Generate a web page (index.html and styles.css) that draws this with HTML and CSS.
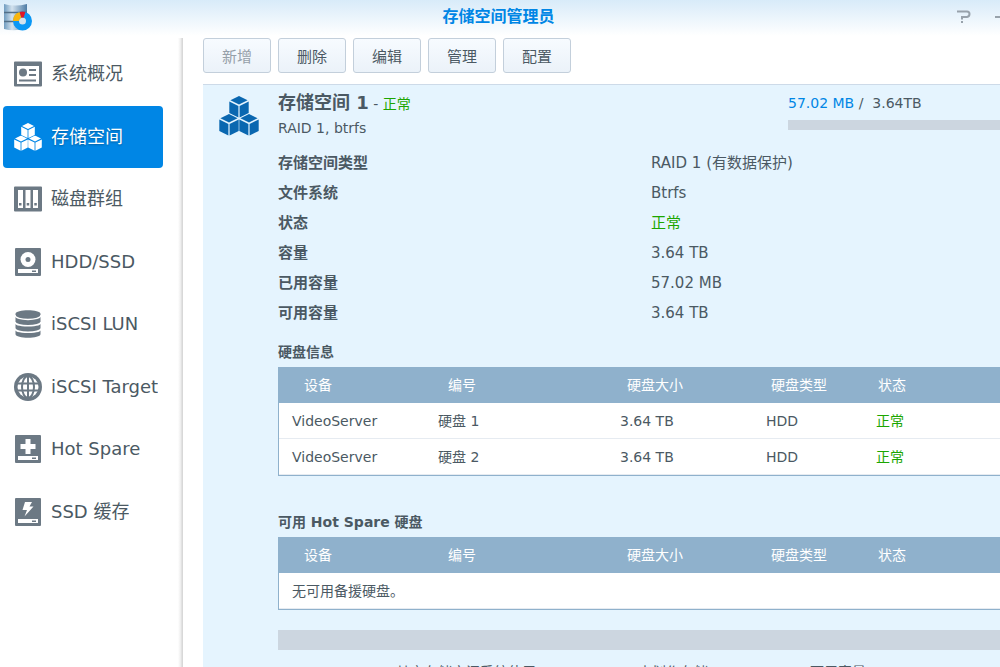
FILE: index.html
```html
<!DOCTYPE html>
<html lang="zh-CN">
<head>
    <meta charset="UTF-8">
    <meta name="viewport" content="width=device-width, initial-scale=1.0">
    <title>存储空间管理员</title>
    <link rel="stylesheet" href="styles.css">
</head>
<body>

<!-- shared icon pieces -->
<svg class="defs" aria-hidden="true">
    <defs>
        <linearGradient id="steel" x1="0" x2="1">
            <stop offset="0" stop-color="#6f9cc0"/>
            <stop offset=".35" stop-color="#d3e2ee"/>
            <stop offset="1" stop-color="#4e7ca5"/>
        </linearGradient>
        <symbol id="cube" viewBox="0 0 20 22">
            <path d="M10 0 L18.600 4.300 L10 8.600 L1.400 4.300 Z"/>
            <path d="M.3 5.500 L9.400 10 V21.500 L.3 17 Z"/>
            <path d="M19.700 5.500 L10.600 10 V21.500 L19.700 17 Z"/>
        </symbol>
        <symbol id="cubes" viewBox="0 0 40 40">
            <use href="#cube" x="10" y="0" width="20" height="22"/>
            <use href="#cube" x="0" y="18" width="20" height="22"/>
            <use href="#cube" x="20" y="18" width="20" height="22"/>
        </symbol>
    </defs>
</svg>

<header class="titlebar">
    <svg class="app-icon" width="30" height="30" viewBox="0 0 30 30" aria-hidden="true">
        <path d="M1 1 Q12 4 24 1 V25 Q12 29 1 26 Z" fill="url(#steel)"/>
        <path d="M1 9.500 H24 M1 18.500 H16" stroke="#526f88" stroke-width="1.500" fill="none"/>
        <circle cx="19.500" cy="18" r="6.500" fill="#d3e2ee" stroke="#0a97f5" stroke-width="6"/>
        <path d="M13 18 A6.500 6.500 0 0 1 17.500 11.800" fill="none" stroke="#f9b50d" stroke-width="6"/>
        <path d="M17.500 11.800 A6.500 6.500 0 0 1 21.500 11.800" fill="none" stroke="#e11628" stroke-width="6"/>
    </svg>
    <h1>存储空间管理员</h1>
    <div class="window-tools">
        <button type="button" aria-label="帮助">
            <svg width="16" height="16" viewBox="0 0 16 16"><path d="M1 2.500 H11 Q13.500 2.500 13.500 5 T11 8 H6 V10.500" fill="none" stroke="#98a2ab" stroke-width="2"/><path d="M5 12 H7 V14 H5 Z" fill="#98a2ab"/></svg>
        </button>
        <button type="button" aria-label="最小化">
            <svg width="16" height="16" viewBox="0 0 16 16"><path d="M1 8 H14" stroke="#98a2ab" stroke-width="2"/></svg>
        </button>
    </div>
</header>

<div class="layout">
    <nav class="sidebar">
        <div class="menu">
            <a href="#overview">
                <svg width="28" height="28" viewBox="0 0 28 28"><path fill-rule="evenodd" d="M1 1.500 H27 Q28 1.500 28 2.500 V25.500 Q28 26.500 27 26.500 H1 Q0 26.500 0 25.500 V2.500 Q0 1.500 1 1.500 Z M3 6 V24 H25 V6 Z"/><circle cx="9" cy="12.500" r="4"/><path d="M15 9 H22 V11 H15 Z M15 14 H22 V16 H15 Z M5 19.500 H22 V21.500 H5 Z"/></svg>
                <span>系统概况</span>
            </a>
            <a href="#volume" class="active">
                <svg width="28" height="28" viewBox="0 0 40 40"><use href="#cubes" width="40" height="40"/></svg>
                <span>存储空间</span>
            </a>
            <a href="#group">
                <svg width="28" height="28" viewBox="0 0 28 28"><path fill-rule="evenodd" d="M1 1.500 H27 Q28 1.500 28 2.500 V25.500 Q28 26.500 27 26.500 H1 Q0 26.500 0 25.500 V2.500 Q0 1.500 1 1.500 Z M4 5 V23 H9 V5 Z M11.500 5 V23 H16.500 V5 Z M19 5 V23 H24 V5 Z"/><path d="M5 18 H7.500 V20.500 H5 Z M12.700 18 H15.200 V20.500 H12.700 Z M20.300 18 H22.800 V20.500 H20.300 Z"/></svg>
                <span>磁盘群组</span>
            </a>
            <a href="#hdd">
                <svg width="28" height="28" viewBox="0 0 28 28"><rect x="1" width="26" height="28" rx="1"/><rect x="4" y="21" width="20" height="4" fill="#fff"/><rect x="18" y="22.500" width="4" height="1.500"/><circle cx="14" cy="11.500" r="7.500" fill="#fff"/><circle cx="14" cy="11.500" r="2.500"/></svg>
                <span>HDD/SSD</span>
            </a>
            <a href="#lun">
                <svg width="28" height="28" viewBox="0 0 28 28"><path d="M1.500 4 V24 C1.500 29 26.500 29 26.500 24 V4 C26.500 -1 1.500 -1 1.500 4 Z"/><path d="M1 5 C1 11 27 11 27 5 M1 12 C1 17 27 17 27 12 M1 18.500 C1 23.500 27 23.500 27 18.500" fill="none" stroke="#fff" stroke-width="1.500"/></svg>
                <span>iSCSI LUN</span>
            </a>
            <a href="#target">
                <svg width="28" height="28" viewBox="0 0 28 28"><circle cx="14" cy="14" r="14"/><circle cx="14" cy="14" r="10.500" fill="#fff"/><path d="M14 2 V26 M3 10.500 H25 M3 17.500 H25" fill="none" stroke="#6c7984" stroke-width="2"/><ellipse cx="14" cy="14" rx="6" ry="11" fill="none" stroke="#6c7984" stroke-width="2"/></svg>
                <span>iSCSI Target</span>
            </a>
            <a href="#spare">
                <svg width="28" height="28" viewBox="0 0 28 28"><rect x="1" width="26" height="28" rx="1"/><rect x="4" y="21" width="20" height="4" fill="#fff"/><rect x="18" y="22.500" width="4" height="1.500"/><path d="M11.500 4 H16.500 V9 H21.500 V14 H16.500 V19 H11.500 V14 H6.500 V9 H11.500 Z" fill="#fff"/></svg>
                <span>Hot Spare</span>
            </a>
            <a href="#cache">
                <svg width="28" height="28" viewBox="0 0 28 28"><rect x="1" width="26" height="28" rx="1"/><rect x="4" y="21" width="20" height="4" fill="#fff"/><rect x="18" y="22.500" width="4" height="1.500"/><path d="M11 4 H18 L15.500 8.500 H19.500 L10.500 18.500 L13 12 H8.500 Z" fill="#fff"/></svg>
                <span>SSD 缓存</span>
            </a>
        </div>
    </nav>

    <main class="content">
        <div class="toolbar">
            <button type="button" disabled>新增</button>
            <button type="button">删除</button>
            <button type="button">编辑</button>
            <button type="button">管理</button>
            <button type="button">配置</button>
        </div>

        <section class="volume">
            <svg class="volume-icon" width="40" height="40" viewBox="0 0 40 40" aria-hidden="true"><use href="#cubes" width="40" height="40"/></svg>

            <div class="volume-body">
                <div class="volume-head">
                    <div>
                        <p class="volume-name"><strong>存储空间 1</strong> - <span class="ok">正常</span></p>
                        <p class="volume-type">RAID 1, btrfs</p>
                    </div>
                    <div class="usage">
                        <p><span class="used">57.02 MB</span> / &nbsp;3.64TB</p>
                        <div class="bar"></div>
                    </div>
                </div>

                <dl class="details">
                    <dt>存储空间类型</dt><dd>RAID 1 (有数据保护)</dd>
                    <dt>文件系统</dt><dd>Btrfs</dd>
                    <dt>状态</dt><dd class="ok">正常</dd>
                    <dt>容量</dt><dd>3.64 TB</dd>
                    <dt>已用容量</dt><dd>57.02 MB</dd>
                    <dt>可用容量</dt><dd>3.64 TB</dd>
                </dl>

                <h2>硬盘信息</h2>
                <table>
                    <thead>
                        <tr><th>设备</th><th>编号</th><th>硬盘大小</th><th>硬盘类型</th><th>状态</th></tr>
                    </thead>
                    <tbody>
                        <tr><td>VideoServer</td><td>硬盘 1</td><td>3.64 TB</td><td>HDD</td><td class="ok">正常</td></tr>
                        <tr><td>VideoServer</td><td>硬盘 2</td><td>3.64 TB</td><td>HDD</td><td class="ok">正常</td></tr>
                    </tbody>
                </table>

                <h2>可用 Hot Spare 硬盘</h2>
                <table>
                    <thead>
                        <tr><th>设备</th><th>编号</th><th>硬盘大小</th><th>硬盘类型</th><th>状态</th></tr>
                    </thead>
                    <tbody>
                        <tr><td colspan="5">无可用备援硬盘。</td></tr>
                    </tbody>
                </table>

                <div class="bar bar-large"></div>
                <div class="legend">
                    <span>其它存储空间系统使用</span>
                    <span>未划作存储</span>
                    <span>可用容量</span>
                </div>
            </div>
        </section>
    </main>
</div>

</body>
</html>
```

FILE: styles.css
```css
* {
    box-sizing: border-box;
}
body {
    margin: 0;
    height: 100vh;
    overflow: hidden;
    display: flex;
    flex-direction: column;
    background: #fff;
    color: #4b5963;
    font-family: "DejaVu Sans", "Noto Sans CJK SC", sans-serif;
    font-size: 14px;
    line-height: 20px;
}
p, h1, h2, dl, dd {
    margin: 0;
}
.defs {
    position: absolute;
    width: 0;
    height: 0;
}
.ok {
    color: #1ca600;
}

/* title bar */
.titlebar {
    flex: none;
    display: grid;
    grid-template-columns: 1fr auto 1fr;
    height: 38px;
    padding: 3px 6px 0 3px;
    background: linear-gradient(#d8ebf9, #fff 36px);
}
.titlebar h1 {
    color: #0086e5;
    font-size: 16px;
    font-weight: bold;
    line-height: 28px;
}
.window-tools {
    display: flex;
    justify-content: flex-end;
    align-items: flex-start;
    gap: 22px;
    margin-right: -16px;
    padding-top: 6px;
}
.window-tools button {
    display: flex;
    padding: 0;
    border: none;
    background: none;
    cursor: pointer;
}

.layout {
    flex: 1;
    display: flex;
    min-height: 0;
}

/* sidebar */
.sidebar {
    flex: none;
    width: 183px;
    padding: 5px 20px 0 3px;
    background: linear-gradient(to left, #d8d8d8 1px, #ececec 2px, #fff 5px);
}
.menu {
    display: grid;
    grid-auto-rows: 1fr;
    height: 500px;
}
.menu a {
    display: flex;
    align-items: center;
    gap: 9px;
    height: 62px;
    padding: 0 2px 0 11px;
    border-radius: 4px;
    color: #4b5963;
    font-size: 18px;
    line-height: 26px;
    text-decoration: none;
    white-space: nowrap;
}
.menu span {
    overflow: hidden;
}
.menu svg {
    flex: none;
    fill: #6c7984;
}
.menu a.active {
    background: #0086e5;
    color: #fff;
    text-shadow: 0 1px 2px rgba(0, 0, 0, 0.3);
}
.menu a.active svg {
    fill: #fff;
}

/* main area */
.content {
    flex: 1;
    min-width: 0;
    padding-left: 20px;
}
.toolbar {
    display: flex;
    gap: 7px;
    margin-bottom: 11px;
}
.toolbar button {
    width: 68px;
    height: 35px;
    padding: 0;
    border: 1px solid #c3cfdb;
    border-radius: 3px;
    background: linear-gradient(#f7fbff, #ebf2f9);
    color: #4b5963;
    font-family: inherit;
    font-size: 15px;
    cursor: pointer;
}
.toolbar button:disabled {
    color: #96a0a9;
    cursor: default;
}
.volume {
    display: flex;
    gap: 19px;
    min-height: 100%;
    padding: 8px 0 0 16px;
    border-top: 1px solid #cddae8;
    background: #e5f4fe;
}
.volume-icon {
    flex: none;
    margin-top: 3px;
    fill: #0a67b0;
}
.volume-body {
    flex: 1;
    min-width: 0;
}
.volume-head {
    display: grid;
    grid-template-columns: 510px 1fr;
}
.volume-name {
    margin-bottom: 4px;
}
.volume-name strong {
    font-size: 18px;
}
.used {
    color: #0086e5;
}
.bar {
    height: 10px;
    margin-top: 7px;
    background: #ccd6e0;
}
.bar-large {
    height: 20px;
    margin-top: 20px;
}
.details {
    display: grid;
    grid-template-columns: 373px 1fr;
    padding-top: 10px;
    font-size: 15px;
    line-height: 30px;
}
.details dt {
    font-weight: bold;
}
h2 {
    padding: 14px 0 5px;
    font-size: 14px;
    line-height: 20px;
}

/* disk tables */
table {
    width: 100%;
    table-layout: fixed;
    border-collapse: separate;
    border-spacing: 0;
    border: 1px solid #8fb1cc;
    border-width: 0 0 1px 1px;
    background: #fff;
}
th, td {
    height: 36px;
    padding: 0 0 0 13px;
    text-align: left;
}
th {
    background: #8fb1cc;
    color: #fff;
    font-weight: normal;
}
td {
    border-bottom: 1px solid #e6ebf1;
}
th:nth-child(1) {
    width: 146px;
    padding-left: 25px;
}
th:nth-child(2) {
    width: 182px;
    padding-left: 23px;
}
th:nth-child(3) {
    width: 146px;
    padding-left: 20px;
}
th:nth-child(4) {
    width: 110px;
    padding-left: 18px;
}
th:nth-child(5) {
    padding-left: 15px;
}
table + h2 {
    padding-top: 36px;
}
.legend {
    display: flex;
    gap: 102px;
    padding: 12px 0 0 118px;
    white-space: nowrap;
}
```
